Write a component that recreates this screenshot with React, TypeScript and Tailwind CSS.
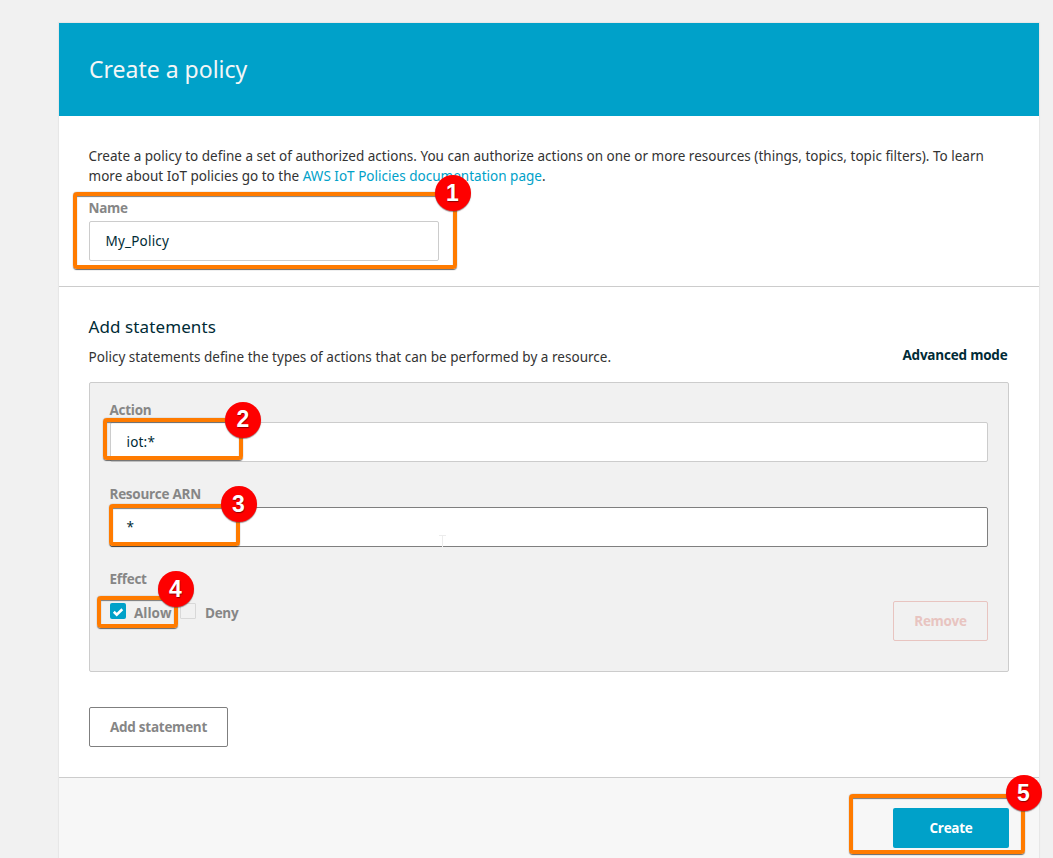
import type { ReactNode } from 'react';

function Badge({ n, className }: { n: number; className: string }) {
  return (
    <span
      className={`absolute z-20 flex h-9 w-9 items-center justify-center rounded-full bg-[#fe0000] font-['Liberation_Sans',sans-serif] text-[23px] leading-none font-bold tracking-normal text-white shadow-[0_1px_1px_rgba(90,60,60,0.6)] [text-shadow:0.5px_1px_1px_rgba(0,0,0,0.45)] ${className}`}
    >
      {n}
    </span>
  );
}

function Highlight({ n, box, badge }: { n: number; box: string; badge: string }) {
  return (
    <div
      className={`pointer-events-none absolute z-10 rounded-[4px] border-4 border-[#ff7b00] shadow-[0_0.5px_1px_rgba(40,40,40,0.7),inset_0_1px_1px_rgba(40,40,40,0.6)] ${box}`}
    >
      <Badge n={n} className={badge} />
    </div>
  );
}

function Label({ children }: { children: ReactNode }) {
  return (
    <div className="-ml-[0.5px] h-5 font-['Open_Sans',sans-serif] text-[13.5px] leading-5 font-bold tracking-[-0.27px] text-[#868686]">
      {children}
    </div>
  );
}

function Field({ value, border }: { value: string; border: string }) {
  return (
    <div
      className={`flex h-10 items-center rounded-[2px] border bg-white px-[15.5px] text-[13.5px] tracking-[0.2px] text-[#002b36] ${border}`}
    >
      {value}
    </div>
  );
}

export default function App() {
  return (
    <div className="h-[858px] w-[1053px] overflow-hidden bg-[#f1f1f1] pt-[23px] pl-[59px] font-['Noto_Sans',sans-serif]">
      <main className="flex h-[835px] w-[980px] flex-col bg-white shadow-[0_0_1px_1px_rgba(0,0,0,0.04)]">
        <header className="flex h-[93px] shrink-0 items-center bg-[#00a1c9] px-[30px] pb-[2px]">
          <h1 className="text-[23px] leading-8 text-[#f3f6f7]">Create a policy</h1>
        </header>

        <section className="h-[171px] shrink-0 border-b border-[#cccccc] px-[30px] pt-[30px]">
          <p className="-ml-[0.5px] text-[13.5px] leading-5 tracking-[0.017px] whitespace-nowrap text-[#333333]">
            Create a policy to define a set of authorized actions. You can authorize actions on one or more
            resources (things, topics, topic filters). To learn
            <br />
            more about IoT policies go to the{' '}
            <a className="text-[#00a1c9]">AWS IoT Policies documentation page</a>.
          </p>
          <div className="relative mt-3 w-[350px]">
            <Label>Name</Label>
            <div className="mt-[3px]">
              <Field value="My_Policy" border="border-[#cccccc]" />
            </div>
            <Highlight
              n={1}
              box="-top-[6px] -left-[16px] h-[77px] w-[384px]"
              badge="-top-[21px] -right-[17.5px]"
            />
          </div>
        </section>

        <section className="h-[491px] shrink-0 border-b border-[#cccccc] px-[30px] pt-[28px]">
          <div className="flex justify-between">
            <div className="-ml-[0.5px]">
              <h2 className="text-[17px] leading-6 tracking-[0.1px] text-[#002b36]">Add statements</h2>
              <p className="mt-2 text-[13.5px] leading-5 tracking-[0.025px] text-[#333333]">
                Policy statements define the types of actions that can be performed by a resource.
              </p>
            </div>
            <a className="mt-[30px] mr-[1.5px] font-['Open_Sans',sans-serif] text-[13.5px] leading-5 font-bold tracking-[-0.2px] text-[#002b36]">
              Advanced mode
            </a>
          </div>

          <div className="mt-[15px] h-[290px] rounded-[2px] border border-[#cccccc] bg-[#f1f1f1] px-5 pt-[17px]">
            <div className="relative">
              <Label>Action</Label>
              <div className="mt-[2px]">
                <Field value="iot:*" border="border-[#cccccc]" />
              </div>
              <Highlight
                n={2}
                box="top-[18px] -left-[7px] h-[42px] w-[140px]"
                badge="-top-[20.5px] -right-[22px]"
              />
            </div>
            <div className="relative mt-[22px]">
              <Label>Resource ARN</Label>
              <div className="mt-[3px]">
                <Field value="*" border="border-[#7f7f7f]" />
              </div>
              <svg className="absolute top-[51px] left-[329px] h-3 w-[7px]" viewBox="0 0 7 12" fill="none" stroke="#ececec">
                <path d="M0 .5h7M3.5 0v12" />
              </svg>
              <Highlight
                n={3}
                box="top-[20px] -left-[1px] h-[42px] w-[131px]"
                badge="-top-[22px] -right-[20.5px]"
              />
            </div>
            <div className="relative mt-[22px] flex justify-between">
              <div>
                <Label>Effect</Label>
                <div className="mt-[14px] flex h-5 items-center font-['Open_Sans',sans-serif] text-[13.5px] leading-5 font-bold text-[#868686]">
                  <span className="mb-[4px] flex h-4 w-4 items-center justify-center rounded-[2px] bg-[#00a1c9]">
                    <svg className="h-4 w-4" viewBox="0 0 16 16" fill="none" stroke="#fff" strokeWidth="2.6">
                      <path d="m3.8 8.8 2.9 2.8 5.6-5.4" />
                    </svg>
                  </span>
                  <span className="ml-2 w-[38px]">Allow</span>
                  <span className="mb-[4px] ml-2 h-4 w-4 rounded-[1px] border border-[#d8d8d8]" />
                  <span className="ml-[9px] tracking-[-0.3px]">Deny</span>
                </div>
              </div>
              <button className="mt-[32px] h-10 w-[95px] rounded-[2px] border border-[#e8c4c0] pt-px font-['Open_Sans',sans-serif] text-[13.5px] font-bold tracking-[-0.3px] text-[#e8c4c0]">
                Remove
              </button>
              <Highlight
                n={4}
                box="top-[27px] -left-[13px] h-[32px] w-[81px]"
                badge="-top-[29px] -right-[19.5px]"
              />
            </div>
          </div>

          <button className="mt-[35px] h-10 w-[139px] rounded-[2px] border border-[#7f7f7f] pt-px font-['Open_Sans',sans-serif] text-[13.5px] font-bold tracking-[-0.25px] text-[#868686]">
            Add statement
          </button>
        </section>

        <footer className="relative flex flex-1 justify-end bg-[#f7f7f7] pt-[30px] pr-[30px]">
          <button className="h-10 w-[116px] rounded-[2px] bg-[#00a1c9] pt-px font-['Open_Sans',sans-serif] text-[13.5px] font-bold tracking-[-0.3px] text-white">
            Create
          </button>
          <Highlight
            n={5}
            box="top-[16px] right-[14px] h-[60px] w-[176px]"
            badge="-top-[23px] -right-[20.5px]"
          />
        </footer>
      </main>
    </div>
  );
}
